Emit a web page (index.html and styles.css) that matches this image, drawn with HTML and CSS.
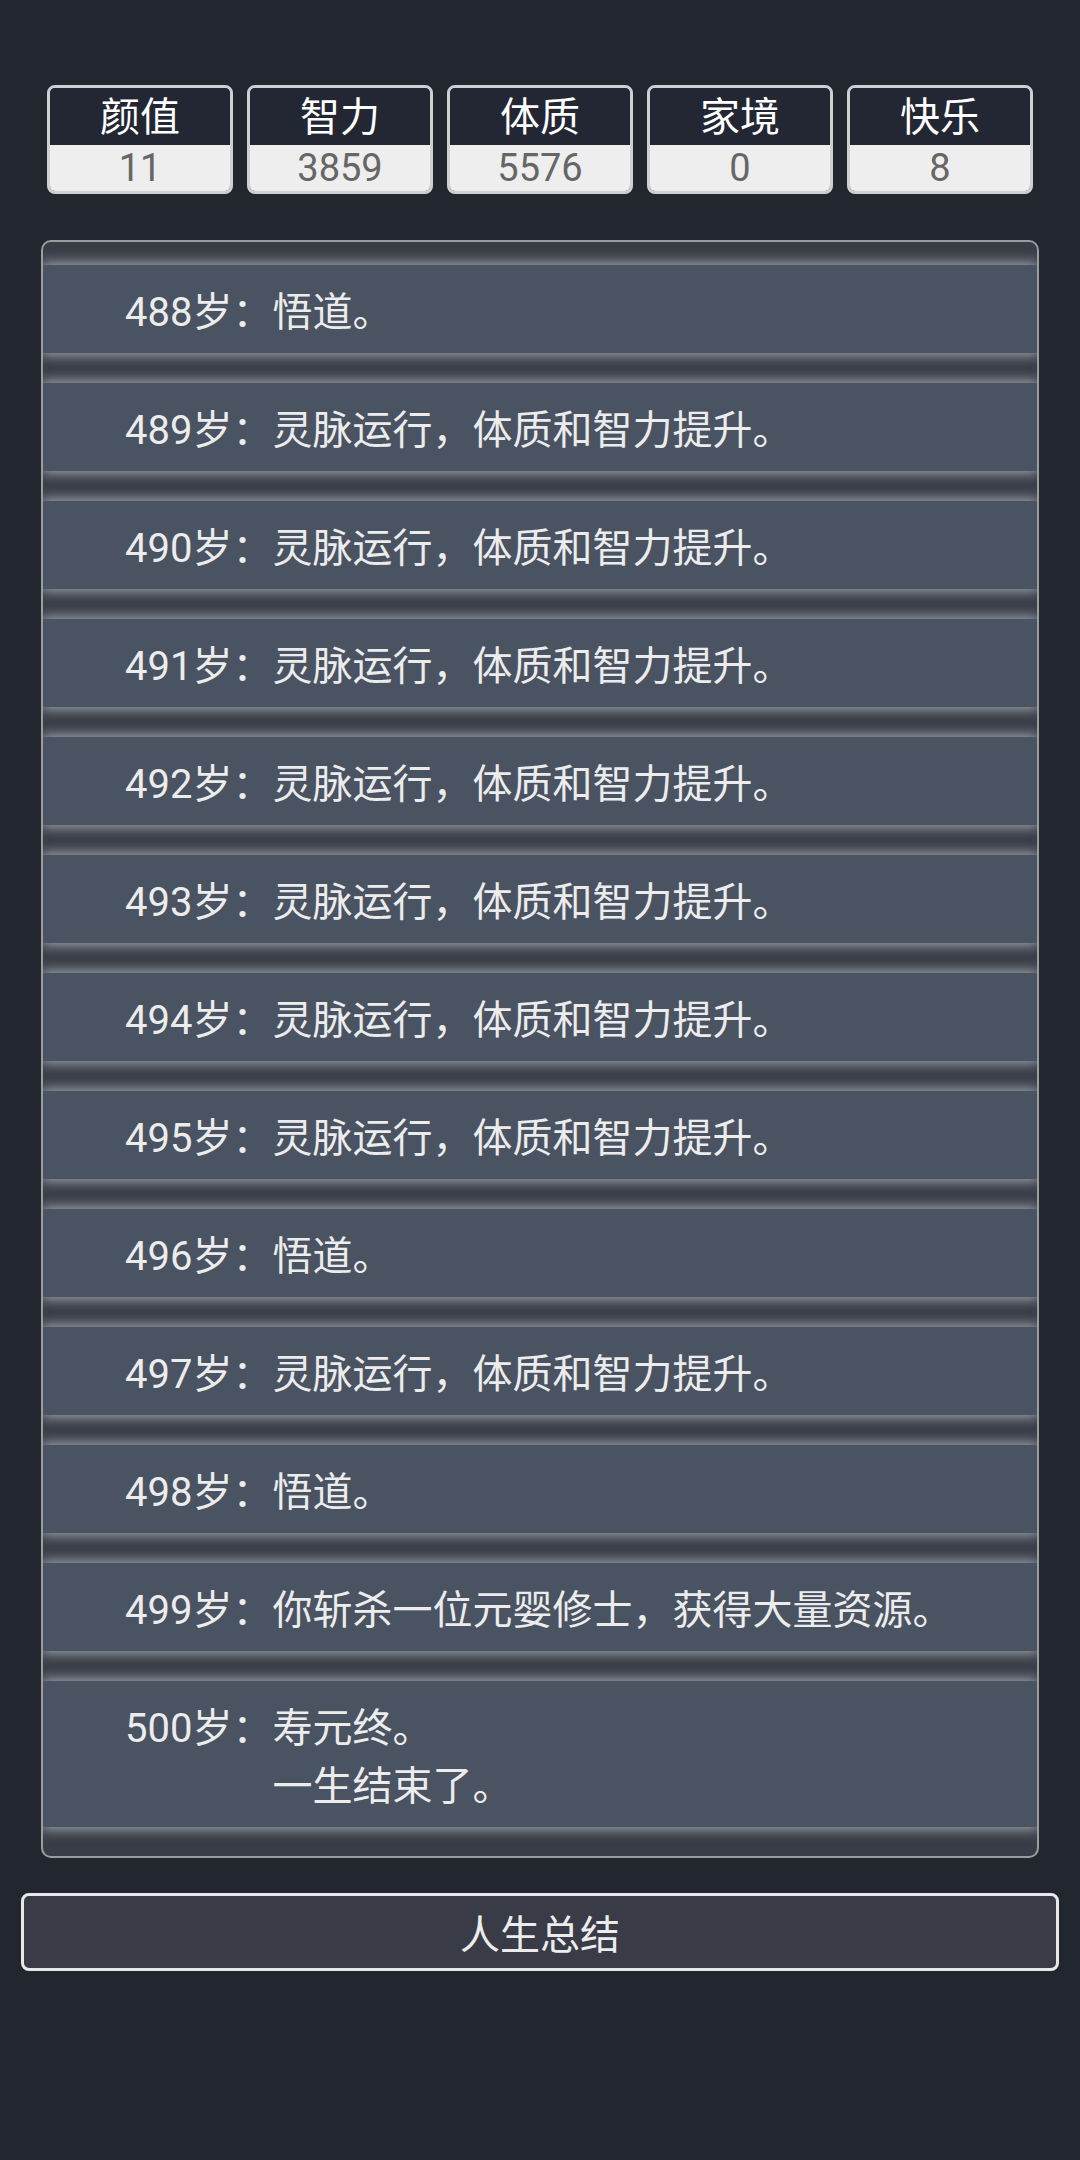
FILE: index.html
```html
<!DOCTYPE html>
<html lang="zh-CN">
<head>
    <meta charset="UTF-8">
    <meta name="viewport" content="width=device-width, initial-scale=1.0">
    <title>人生重开模拟器</title>
    <link rel="stylesheet" href="styles.css">
</head>
<body>
    <div class="stats">
        <div class="stat">
            <div class="statName">颜值</div>
            <div class="statValue">11</div>
        </div>
        <div class="stat">
            <div class="statName">智力</div>
            <div class="statValue">3859</div>
        </div>
        <div class="stat">
            <div class="statName">体质</div>
            <div class="statValue">5576</div>
        </div>
        <div class="stat">
            <div class="statName">家境</div>
            <div class="statValue">0</div>
        </div>
        <div class="stat">
            <div class="statName">快乐</div>
            <div class="statValue">8</div>
        </div>
    </div>

    <ul class="lifeLog">
        <li class="logItem"><span class="age">488岁：</span><span class="event">悟道。</span></li>
        <li class="logItem"><span class="age">489岁：</span><span class="event">灵脉运行，体质和智力提升。</span></li>
        <li class="logItem"><span class="age">490岁：</span><span class="event">灵脉运行，体质和智力提升。</span></li>
        <li class="logItem"><span class="age">491岁：</span><span class="event">灵脉运行，体质和智力提升。</span></li>
        <li class="logItem"><span class="age">492岁：</span><span class="event">灵脉运行，体质和智力提升。</span></li>
        <li class="logItem"><span class="age">493岁：</span><span class="event">灵脉运行，体质和智力提升。</span></li>
        <li class="logItem"><span class="age">494岁：</span><span class="event">灵脉运行，体质和智力提升。</span></li>
        <li class="logItem"><span class="age">495岁：</span><span class="event">灵脉运行，体质和智力提升。</span></li>
        <li class="logItem"><span class="age">496岁：</span><span class="event">悟道。</span></li>
        <li class="logItem"><span class="age">497岁：</span><span class="event">灵脉运行，体质和智力提升。</span></li>
        <li class="logItem"><span class="age">498岁：</span><span class="event">悟道。</span></li>
        <li class="logItem"><span class="age">499岁：</span><span class="event">你斩杀一位元婴修士，获得大量资源。</span></li>
        <li class="logItem"><span class="age">500岁：</span><span class="event">寿元终。<br>一生结束了。</span></li>
    </ul>

    <button class="summaryButton">人生总结</button>
</body>
</html>
```

FILE: styles.css
```css
* {
    margin: 0;
    padding: 0;
    box-sizing: border-box;
}
body {
    background: #21262f;
    font-family: "Roboto", "Noto Sans CJK SC", sans-serif;
    color: #ececec;
    display: flex;
    flex-direction: column;
    padding-top: 85px;
}

/* верхние показатели */
.stats {
    display: flex;
    gap: 14px;
    padding: 0 47px;
}
.stat {
    flex: 1;
    border: 3px solid #cfd0d2;
    border-radius: 8px;
    overflow: hidden;
    text-align: center;
}
.statName {
    height: 57px;
    padding-top: 3px;
    line-height: 54px;
    font-size: 40px;
    color: #fff;
    background: #222733;
}
.statValue {
    height: 46px;
    padding-top: 1px;
    line-height: 45px;
    font-size: 38px;
    color: #666;
    background: #eeeeee;
}

/* список событий */
.lifeLog {
    list-style: none;
    margin: 46px 41px 0;
    padding: 23px 0 29px;
    border: 2px solid #9b9c9e;
    border-radius: 10px;
    background: #393d47;
    overflow: hidden;
    display: flex;
    flex-direction: column;
    gap: 30px;
}
.logItem {
    display: flex;
    padding: 19px 0 11px 82px;
    font-size: 40px;
    line-height: 58px;
    background: #4a5362;
    box-shadow: 0 0 12px 2px #a3a8b1;
}
.age {
    flex-shrink: 0;
}

.summaryButton {
    margin: 35px 21px 0;
    height: 78px;
    border: 3px solid #e8e8e8;
    border-radius: 8px;
    background: #393c46;
    color: #ececec;
    font-family: "Noto Sans CJK SC", sans-serif;
    font-size: 40px;
    line-height: 72px;
    cursor: pointer;
}
```
